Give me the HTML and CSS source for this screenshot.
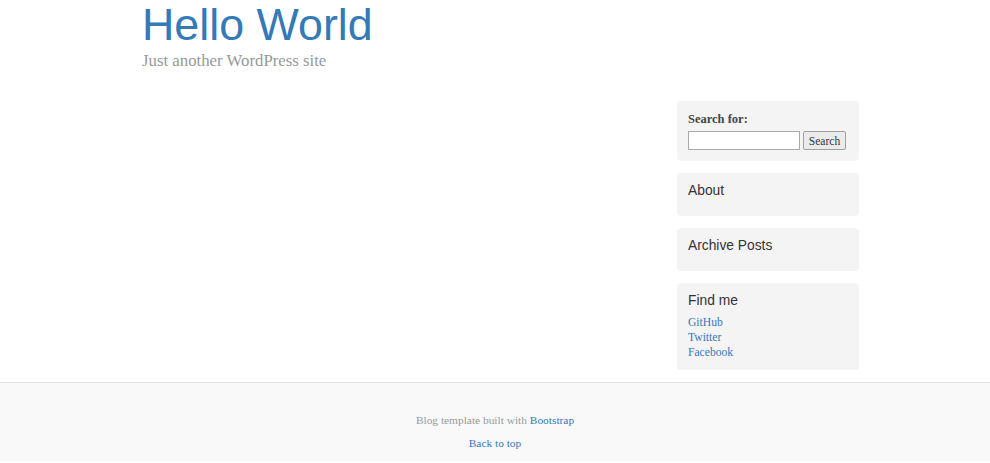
FILE: index.html
```html
<!DOCTYPE html>
<html lang="en">
<head>
<meta charset="utf-8">
<title>Hello World</title>
<link rel="stylesheet" href="styles.css">
</head>
<body>
<div class="container">
  <header class="blog-header">
    <h1 class="blog-title"><a href="#">Hello World</a></h1>
    <p class="blog-description">Just another WordPress site</p>
  </header>
  <div class="row">
    <main class="blog-main"></main>
    <aside class="sidebar">
      <div class="module">
        <form class="search-form">
          <label class="search-label" for="s">Search for:</label>
          <div class="search-row">
            <input type="text" id="s" class="search-input">
            <button type="button" class="search-btn">Search</button>
          </div>
        </form>
      </div>
      <div class="module">
        <h4 class="module-title">About</h4>
      </div>
      <div class="module">
        <h4 class="module-title">Archive Posts</h4>
      </div>
      <div class="module module-links">
        <h4 class="module-title">Find me</h4>
        <ol class="links">
          <li><a href="#">GitHub</a></li>
          <li><a href="#">Twitter</a></li>
          <li><a href="#">Facebook</a></li>
        </ol>
      </div>
    </aside>
  </div>
</div>
<footer class="blog-footer">
  <p>Blog template built with <a href="#">Bootstrap</a></p>
  <p><a href="#">Back to top</a></p>
</footer>
</body>
</html>
```

FILE: styles.css
```css
html, body {
  margin: 0;
  padding: 0;
}
body {
  font-family: "Liberation Serif", Georgia, serif;
  color: #555;
  background: #fff;
}
a {
  color: #337ab7;
  text-decoration: none;
}
.container {
  width: 717px;
  margin-left: 142px;
}
.blog-title {
  margin: 0;
  font-family: "Liberation Sans", Arial, sans-serif;
  font-weight: normal;
  font-size: 44.8px;
  line-height: 49px;
}
.blog-description {
  margin: 2px 0 0;
  font-size: 16.8px;
  line-height: 20px;
  color: #999;
}
.row {
  display: flex;
  margin-top: 30px;
}
.blog-main {
  flex: 1;
}
.sidebar {
  width: 182px;
  display: flex;
  flex-direction: column;
  gap: 12px;
}
.module {
  background: #f4f4f4;
  border-radius: 4px;
  padding: 11px;
}
.module-links {
  padding-bottom: 10px;
}
.search-label {
  display: block;
  font-size: 12.5px;
  font-weight: bold;
  color: #444;
  line-height: 15px;
}
.search-row {
  display: flex;
  gap: 3px;
  margin-top: 4px;
}
.search-input {
  width: 112px;
  height: 19px;
  box-sizing: border-box;
  border: 1px solid #a9a9a9;
  background: #fff;
  padding: 0 2px;
  margin: 0;
}
.search-btn {
  width: 43px;
  height: 19px;
  box-sizing: border-box;
  padding: 0;
  margin: 0;
  font-family: "Liberation Serif", Georgia, serif;
  font-size: 11.5px;
  color: #333;
  background: #ebebeb;
  border: 1px solid #a0a0a0;
  border-radius: 2px;
}
.module-title {
  margin: 0 0 7px;
  font-family: "Liberation Sans", Arial, sans-serif;
  font-weight: normal;
  font-size: 13.8px;
  line-height: 14px;
  color: #333;
}
.links {
  list-style: none;
  margin: 2px 0 0;
  padding: 0;
  font-size: 11.6px;
  line-height: 15px;
}
.blog-footer {
  margin-top: 12px;
  border-top: 1px solid #e5e5e5;
  background: #f9f9f9;
  text-align: center;
  padding: 30px 0 10px;
  font-size: 11.4px;
  color: #999;
}
.blog-footer p {
  margin: 0 0 8px;
  line-height: 15px;
}
.blog-footer p:last-child {
  margin-bottom: 0;
}
```
